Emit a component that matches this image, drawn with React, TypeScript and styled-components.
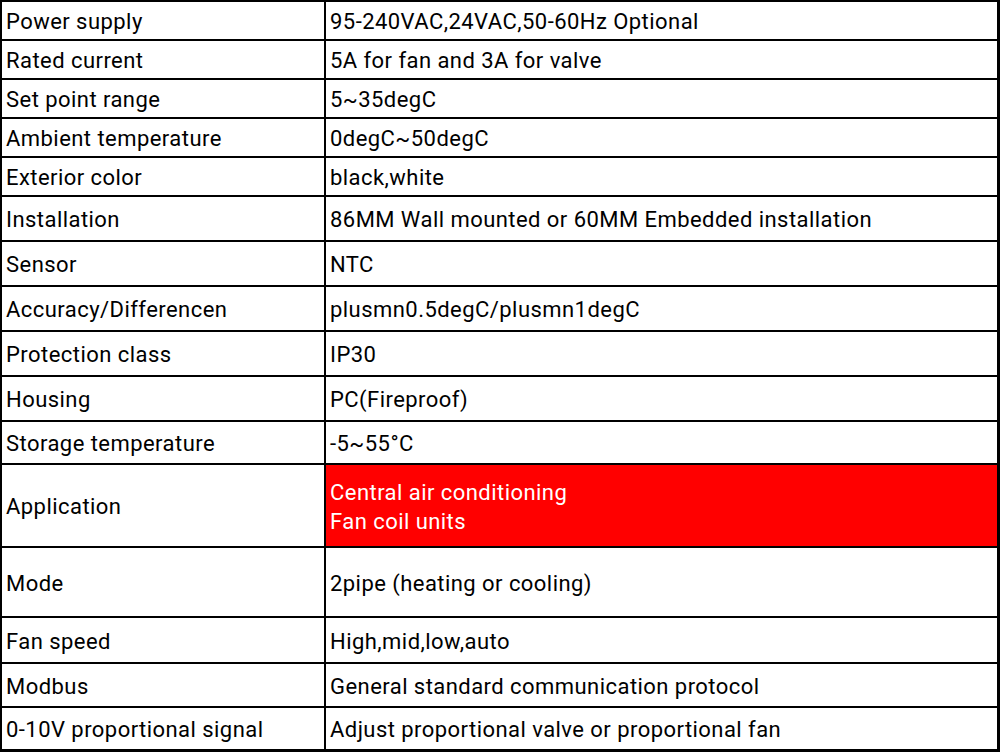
import styled, { createGlobalStyle } from "styled-components";

const GlobalStyle = createGlobalStyle`
    html, body {
        margin: 0;
        padding: 0;
        background: #ffffff;
    }
`

const Sheet = styled.div`
    box-sizing: border-box;
    width: 1000px;
    height: 752px;
    display: flex;
    flex-direction: column;
    border-style: solid;
    border-color: #000;
    border-width: 2px 3px 3px 2px;
    background: #fff;
    font-family: Roboto, "Liberation Sans", sans-serif;
    font-size: 22px;
    letter-spacing: 0.45px;
    color: #000;
`

const Row = styled.div<{ $h: number; $last?: boolean }>`
    display: flex;
    height: ${(props) => props.$h}px;
    flex-shrink: 0;
    border-bottom: ${(props) => (props.$last ? "none" : "2px solid #000")};
`

const Label = styled.div`
    box-sizing: border-box;
    width: 324px;
    flex-shrink: 0;
    display: flex;
    align-items: center;
    padding: 2px 0 0 4px;
    border-right: 2px solid #000;
    white-space: nowrap;
`

const Value = styled.div<{ $hot?: boolean }>`
    flex: 1;
    display: flex;
    flex-direction: column;
    justify-content: center;
    padding: 2px 0 0 4px;
    line-height: 29px;
    white-space: nowrap;
    background: ${(props) => (props.$hot ? "#ff0000" : "transparent")};
    color: ${(props) => (props.$hot ? "#fff" : "#000")};
`

interface SpecRow {
    label: string;
    value: string[];
    h: number;
    hot?: boolean;
}

const specs: SpecRow[] = [
    { label: "Power supply", value: ["95-240VAC,24VAC,50-60Hz Optional"], h: 37 },
    { label: "Rated current", value: ["5A for fan and 3A for valve"], h: 37 },
    { label: "Set point range", value: ["5~35degC"], h: 37 },
    { label: "Ambient temperature", value: ["0degC~50degC"], h: 37 },
    { label: "Exterior color", value: ["black,white"], h: 37 },
    { label: "Installation", value: ["86MM Wall mounted or 60MM Embedded installation"], h: 43 },
    { label: "Sensor", value: ["NTC"], h: 43 },
    { label: "Accuracy/Differencen", value: ["plusmn0.5degC/plusmn1degC"], h: 43 },
    { label: "Protection class", value: ["IP30"], h: 43 },
    { label: "Housing", value: ["PC(Fireproof)"], h: 43 },
    { label: "Storage temperature", value: ["-5~55°C"], h: 41 },
    { label: "Application", value: ["Central air conditioning", "Fan coil units"], h: 81, hot: true },
    { label: "Mode", value: ["2pipe (heating or cooling)"], h: 68 },
    { label: "Fan speed", value: ["High,mid,low,auto"], h: 44 },
    { label: "Modbus", value: ["General standard communication protocol"], h: 42 },
    { label: "0-10V proportional signal", value: ["Adjust proportional valve or proportional fan"], h: 41 },
]

const App = () => {
    return (
        <>
            <GlobalStyle />
            <Sheet>
                {specs.map((s, i) => (
                    <Row key={s.label} $h={s.h} $last={i === specs.length - 1}>
                        <Label>{s.label}</Label>
                        <Value $hot={s.hot}>
                            {s.value.map((v) => (
                                <span key={v}>{v}</span>
                            ))}
                        </Value>
                    </Row>
                ))}
            </Sheet>
        </>
    )
}

export default App;
